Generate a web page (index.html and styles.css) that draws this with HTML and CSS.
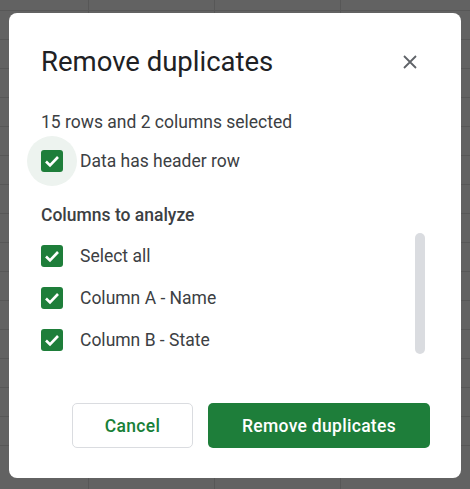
FILE: index.html
```html
<!DOCTYPE html>
<html lang="en">
<head>
  <meta charset="UTF-8" />
  <title>Remove duplicates</title>
  <link rel="stylesheet" href="styles.css">
</head>
<body>

  <div class="dialog">
    <div class="header">
      <div class="title">Remove duplicates</div>
      <button class="close" aria-label="Close">
        <svg width="14" height="14" viewBox="0 0 14 14">
          <path d="M1 1L13 13M13 1L1 13" stroke="#5f6368" stroke-width="1.8" fill="none"/>
        </svg>
      </button>
    </div>

    <div class="summary">15 rows and 2 columns selected</div>

    <label class="row header-row">
      <span class="ripple">
        <span class="box">
          <svg width="22" height="22" viewBox="0 0 22 22"><path d="M5 11.5L9 15.5L17 7" stroke="#fff" stroke-width="2.6" fill="none"/></svg>
        </span>
      </span>
      <span class="label">Data has header row</span>
    </label>

    <div class="section">Columns to analyze</div>

    <div class="list-wrap">
      <div class="list">
        <label class="row">
          <span class="box">
            <svg width="22" height="22" viewBox="0 0 22 22"><path d="M5 11.5L9 15.5L17 7" stroke="#fff" stroke-width="2.6" fill="none"/></svg>
          </span>
          <span class="label">Select all</span>
        </label>
        <label class="row">
          <span class="box">
            <svg width="22" height="22" viewBox="0 0 22 22"><path d="M5 11.5L9 15.5L17 7" stroke="#fff" stroke-width="2.6" fill="none"/></svg>
          </span>
          <span class="label">Column A - Name</span>
        </label>
        <label class="row">
          <span class="box">
            <svg width="22" height="22" viewBox="0 0 22 22"><path d="M5 11.5L9 15.5L17 7" stroke="#fff" stroke-width="2.6" fill="none"/></svg>
          </span>
          <span class="label">Column B - State</span>
        </label>
      </div>
      <div class="scrollbar"></div>
    </div>

    <div class="actions">
      <button class="btn cancel">Cancel</button>
      <button class="btn primary">Remove duplicates</button>
    </div>
  </div>

</body>
</html>
```

FILE: styles.css
```css
* {
  box-sizing: border-box;
  margin: 0;
  padding: 0;
}

html, body {
  height: 100%;
}

body {
  font-family: Roboto, 'Liberation Sans', sans-serif;
  background-color: #626262;
  background-image:
    repeating-linear-gradient(to right, transparent 0 125px, #575757 125px 126px),
    repeating-linear-gradient(to bottom, transparent 0 28px, #575757 28px 29px);
  background-position: -37px 0, 0 -18px;
  padding: 13px 0 0 9px;
  overflow: hidden;
}

.dialog {
  width: 452px;
  height: 465px;
  background: #fff;
  border-radius: 8px;
  padding: 31px 31px 0 32px;
}

.header {
  display: flex;
  align-items: center;
  justify-content: space-between;
  height: 36px;
}

.title {
  font-size: 27.5px;
  line-height: 36px;
  color: #202124;
}

.close {
  width: 36px;
  height: 36px;
  margin-right: 2px;
  background: none;
  border: none;
  display: flex;
  align-items: center;
  justify-content: center;
  cursor: pointer;
}

.summary {
  margin-top: 30px;
  font-size: 17.5px;
  line-height: 24px;
  color: #3c4043;
}

.row {
  display: flex;
  align-items: center;
  height: 42px;
  cursor: pointer;
}

.header-row {
  margin-top: 6px;
}

.ripple {
  width: 50px;
  height: 50px;
  margin: 0 -14px 0 -14px;
  border-radius: 50%;
  background: #edf3ef;
  display: flex;
  align-items: center;
  justify-content: center;
  flex-shrink: 0;
}

.box {
  width: 22px;
  height: 22px;
  border-radius: 3px;
  background: #1e7e3a;
  display: flex;
  flex-shrink: 0;
}

.label {
  margin-left: 17px;
  font-size: 17.5px;
  color: #3c4043;
}

.section {
  margin-top: 21px;
  font-size: 17.5px;
  font-weight: 500;
  line-height: 24px;
  color: #3c4043;
}

.list-wrap {
  display: flex;
  margin-top: 6px;
  height: 128px;
}

.list {
  flex: 1;
  padding-top: 2px;
}

.scrollbar {
  width: 10px;
  height: 121px;
  border-radius: 5px;
  background: #dadce0;
  margin-right: 5px;
}

.actions {
  display: flex;
  justify-content: flex-end;
  gap: 15px;
  margin-top: 42px;
}

.btn {
  height: 45px;
  border-radius: 5px;
  font-family: Roboto, 'Liberation Sans', sans-serif;
  font-size: 17.5px;
  font-weight: 500;
  letter-spacing: 0.3px;
  cursor: pointer;
}

.cancel {
  width: 121px;
  background: #fff;
  border: 1px solid #dadce0;
  color: #188038;
}

.primary {
  width: 222px;
  background: #1e7e3a;
  border: none;
  color: #fff;
}
```
